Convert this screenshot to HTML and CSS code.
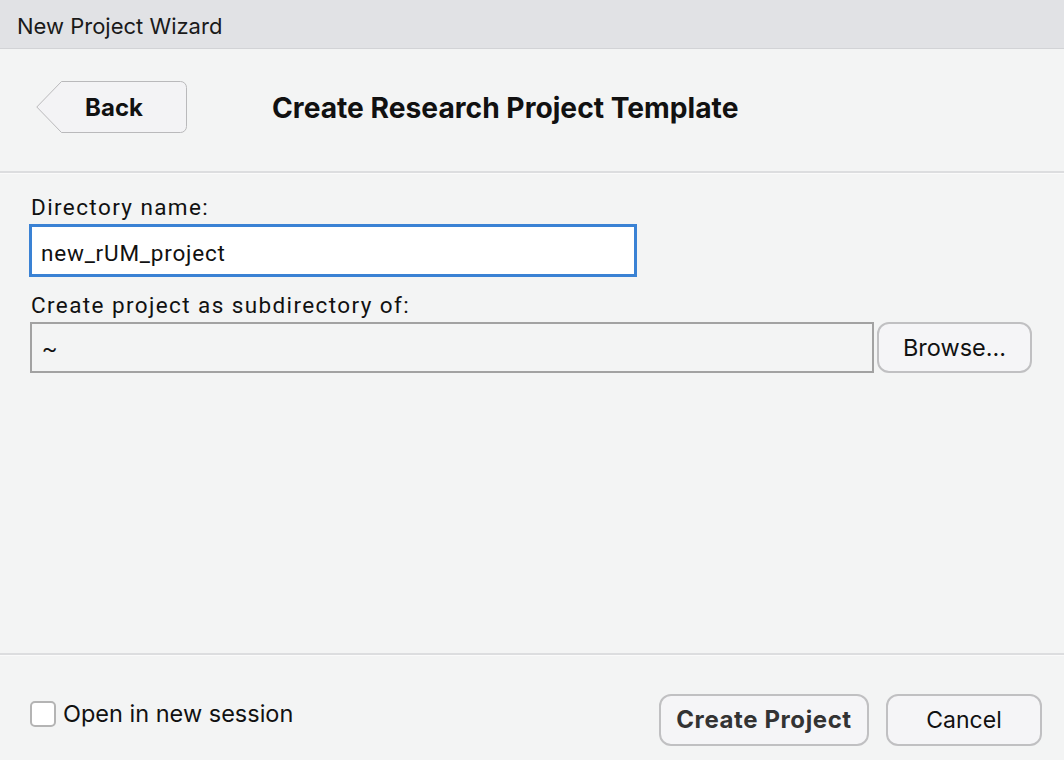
FILE: index.html
```html
<!DOCTYPE html>
<html>
<head>
<meta charset="utf-8">
<link rel="stylesheet" href="styles.css">
</head>
<body>
<div class="window">
  <div class="titlebar">New Project Wizard</div>
  <div class="header">
    <button class="back">
      <svg class="back-shape" width="152" height="53" viewBox="0 0 152 53">
        <path d="M25.5 0.5 H144.5 A6 6 0 0 1 150.5 6.5 V45.5 A6 6 0 0 1 144.5 51.5 H25.5 L0.8 26 Z" fill="#f3f3f5" stroke="#b9b9bb" stroke-width="1"/>
      </svg>
      <span class="back-label">Back</span>
    </button>
    <h1 class="page-title">Create Research Project Template</h1>
  </div>
  <div class="content">
    <label class="field-label">Directory name:</label>
    <div class="input input-focus">new_rUM_project</div>
    <label class="field-label field-label-2">Create project as subdirectory of:</label>
    <div class="dir-row">
      <div class="input input-readonly">~</div>
      <button class="btn browse">Browse...</button>
    </div>
  </div>
  <div class="footer">
    <label class="check">
      <span class="checkbox"></span>
      <span class="check-text">Open in new session</span>
    </label>
    <div class="actions">
      <button class="btn create">Create Project</button>
      <button class="btn cancel">Cancel</button>
    </div>
  </div>
</div>
</body>
</html>
```

FILE: styles.css
```css
* { box-sizing: border-box; }
html, body { margin: 0; padding: 0; }
body {
  width: 1064px;
  height: 760px;
  overflow: hidden;
  background: #f3f4f4;
  font-family: "Liberation Sans", Arial, sans-serif;
  color: #111;
}
.window {
  display: flex;
  flex-direction: column;
  height: 760px;
}
.titlebar {
  height: 49px;
  background: #e1e2e5;
  border-bottom: 1px solid #d2d3d6;
  padding-left: 17px;
  font-family: "Inter", "Liberation Sans", sans-serif;
  font-size: 22px;
  line-height: 52px;
  color: #1a1a1a;
}
.header {
  height: 124px;
  display: flex;
  align-items: center;
  padding-left: 36px;
  border-bottom: 2px solid #dcdddf;
  box-shadow: 0 1px 0 #fafafa;
}
.back {
  position: relative;
  width: 152px;
  height: 53px;
  margin-top: -5px;
  padding: 0;
  border: none;
  background: none;
  font-family: "Inter", "Liberation Sans", sans-serif;
  font-weight: 700;
  font-size: 24px;
  color: #111;
}
.back-shape {
  position: absolute;
  left: 0;
  top: 0;
}
.back-label {
  position: relative;
  display: block;
  padding-left: 4px;
  text-align: center;
  line-height: 51px;
}
.page-title {
  margin: -4px 0 0 84px;
  font-family: "Inter", "Liberation Sans", sans-serif;
  font-weight: 700;
  font-size: 28.2px;
  color: #111;
}
.content {
  flex: 1;
  padding: 20px 31px 0 29px;
  display: flex;
  flex-direction: column;
}
.field-label {
  display: block;
  font-family: "Roboto", "Liberation Sans", sans-serif;
  font-size: 22.5px;
  letter-spacing: 1.4px;
  line-height: 28px;
  padding-left: 2px;
  margin-bottom: 3px;
  color: #111;
}
.field-label-2 { margin-top: 14px; }
.input {
  height: 53px;
  font-family: "Roboto", "Liberation Sans", sans-serif;
  font-size: 22.5px;
  letter-spacing: 0.8px;
  display: flex;
  align-items: center;
  padding-left: 9px;
  color: #111;
}
.input-focus {
  width: 608px;
  padding-top: 4px;
  background: #fff;
  border: 3px solid #3a82d4;
}
.dir-row {
  display: flex;
  align-items: stretch;
  gap: 3px;
}
.input-readonly {
  width: 844px;
  height: 51px;
  margin-left: 1px;
  background: #f3f4f4;
  border: 2px solid #a2a2a2;
  padding-left: 10px;
}
.btn {
  background: #f5f5f7;
  border: 2px solid #c0c0c2;
  border-radius: 12px;
  font-family: "Inter", "Liberation Sans", sans-serif;
  font-size: 23.5px;
  color: #111;
  padding: 0;
}
.browse {
  width: 155px;
  height: 51px;
}
.footer {
  height: 107px;
  border-top: 2px solid #dcdddf;
  box-shadow: inset 0 1px 0 #fafafa;
  display: flex;
  align-items: center;
  justify-content: space-between;
  padding: 0 22px 0 30px;
}
.check {
  display: flex;
  align-items: center;
  gap: 7px;
  margin-top: 12px;
}
.checkbox {
  width: 26px;
  height: 26px;
  border: 2px solid #b4b4b4;
  border-radius: 5px;
  background: #fff;
}
.check-text {
  font-family: "Inter", "Liberation Sans", sans-serif;
  font-size: 23.5px;
  color: #111;
}
.actions {
  display: flex;
  gap: 17px;
  margin-top: 24px;
}
.create {
  width: 210px;
  height: 52px;
  font-weight: 700;
  font-size: 24px;
  letter-spacing: 0.6px;
  color: #333;
}
.cancel {
  width: 156px;
  height: 52px;
  font-size: 23px;
}
```
